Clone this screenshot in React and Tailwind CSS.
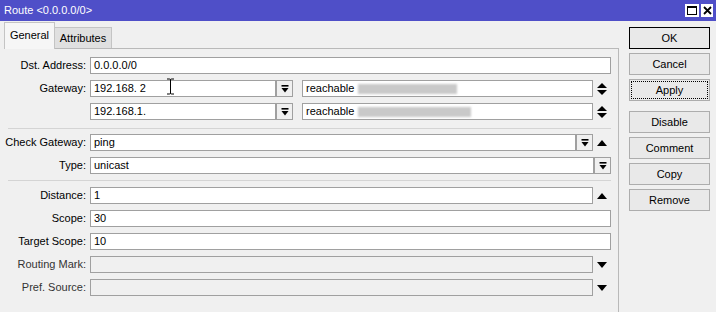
import React from "react";

const FONT = "font-['Liberation_Sans',Arial,sans-serif]";

function DropBtn() {
  return (
    <div className="w-[17px] h-[17px] shrink-0 border border-[#a0a0a0] bg-[#f0f0f0] flex items-center justify-center">
      <svg width="8" height="8" viewBox="0 0 8 8">
        <rect x="0.5" y="0" width="7" height="1.6" fill="#000" />
        <polygon points="0.5,3 7.5,3 4,7.5" fill="#000" />
      </svg>
    </div>
  );
}

function Arrow({ kind }) {
  return (
    <div className="w-[18px] h-[17px] shrink-0 flex items-center justify-center">
      {kind === "up" && (
        <svg width="10" height="6" viewBox="0 0 10 6">
          <polygon points="0,6 10,6 5,0" fill="#000" />
        </svg>
      )}
      {kind === "down" && (
        <svg width="10" height="6" viewBox="0 0 10 6">
          <polygon points="0,0 10,0 5,6" fill="#000" />
        </svg>
      )}
      {kind === "updown" && (
        <svg width="10" height="12" viewBox="0 0 10 12">
          <polygon points="0,5 10,5 5,0" fill="#000" />
          <polygon points="0,7 10,7 5,12" fill="#000" />
        </svg>
      )}
    </div>
  );
}

function Field({ value, disabled, className = "", children }) {
  return (
    <div
      className={`relative h-[17px] border border-[#a0a0a0] flex items-center pl-[3px] leading-none ${
        disabled ? "bg-[#f0f0f0]" : "bg-white"
      } ${className}`}
    >
      <span>{value}</span>
      {children}
    </div>
  );
}

function Row({ label, children }) {
  return (
    <div className="flex h-[17px] items-center">
      <div className="w-[83px] text-right pr-[1px] leading-none">{label}</div>
      <div className="ml-[3px] w-[521px] flex items-center">{children}</div>
    </div>
  );
}

function Sep({ top, bottom }) {
  return (
    <div
      className={`ml-[4px] w-[603px] h-px bg-[#d4d4d4] ${top} ${bottom}`}
    />
  );
}

function Blur({ w }) {
  return (
    <span
      className="ml-[4px] h-[10px] bg-[#c9c9c9] blur-[1px]"
      style={{ width: w }}
    />
  );
}

function Btn({ label, primary, focus, className = "" }) {
  return (
    <div
      className={`relative h-[22px] w-[81px] flex items-center justify-center bg-[#e9e9e9] border ${
        primary ? "border-black" : "border-[#adadad]"
      } ${className}`}
    >
      {focus && (
        <div className="absolute inset-[1px] border border-dotted border-black" />
      )}
      <span className="leading-none">{label}</span>
    </div>
  );
}

export default function App() {
  return (
    <div
      className={`${FONT} w-[716px] h-[312px] overflow-hidden bg-[#f0f0f0] text-[11px] text-black`}
    >
      <div className="h-[21px] bg-[#4f4fc8] flex items-center justify-between pl-[4px] pr-[3px] text-white">
        <span className="leading-none">Route &lt;0.0.0.0/0&gt;</span>
        <div className="flex gap-[2px]">
          <div className="w-[14px] h-[13px] bg-white flex items-center justify-center">
            <div className="w-[10px] h-[9px] border border-black border-t-2" />
          </div>
          <div className="w-[12px] h-[13px] bg-white flex items-center justify-center">
            <svg width="9" height="9" viewBox="0 0 9 9">
              <path d="M1 1 L8 8 M8 1 L1 8" stroke="#000" strokeWidth="1.8" />
            </svg>
          </div>
        </div>
      </div>

      <div className="flex">
        <div className="w-[619px] pl-[4px]">
          <div className="flex items-end h-[27px] pt-[1px]">
            <div className="relative z-10 w-[51px] h-[27px] -mb-px bg-[#f6f6f6] border border-b-0 border-[#c4c4c4] flex items-center justify-center leading-none pb-[2px]">
              General
            </div>
            <div className="w-[57px] h-[21px] bg-[#e0e0e0] border border-l-0 border-b-0 border-[#c4c4c4] flex items-center justify-center leading-none">
              Attributes
            </div>
          </div>
          <div className="h-[264px] bg-[#f0f0f0] border-t border-r border-[#b9b9b9] pt-[8px]">
            <div className="flex flex-col gap-[6px]">
              <Row label="Dst. Address:">
                <Field value="0.0.0.0/0" className="w-[521px]" />
              </Row>
              <Row label="Gateway:">
                <Field value="192.168. 2" className="w-[186px]">
                  <svg
                    className="absolute left-[75px] top-[-3px]"
                    width="9"
                    height="17"
                    viewBox="0 0 9 17"
                  >
                    <path
                      d="M1 1 H3.5 Q4.5 1 4.5 2 V15 Q4.5 16 3.5 16 H1 M8 1 H5.5 Q4.5 1 4.5 2 M4.5 15 Q4.5 16 5.5 16 H8"
                      stroke="#000"
                      strokeWidth="1"
                      fill="none"
                    />
                  </svg>
                </Field>
                <DropBtn />
                <Field value="reachable" className="ml-[9px] w-[291px]">
                  <Blur w={99} />
                </Field>
                <Arrow kind="updown" />
              </Row>
              <Row label="">
                <Field value="192.168.1." className="w-[186px]" />
                <DropBtn />
                <Field value="reachable" className="ml-[9px] w-[291px]">
                  <Blur w={113} />
                </Field>
                <Arrow kind="updown" />
              </Row>
            </div>
            <Sep top="mt-[8px]" bottom="mb-[5px]" />
            <div className="flex flex-col gap-[6px]">
              <Row label="Check Gateway:">
                <Field value="ping" className="w-[486px]" />
                <DropBtn />
                <Arrow kind="up" />
              </Row>
              <Row label="Type:">
                <Field value="unicast" className="w-[504px]" />
                <DropBtn />
              </Row>
            </div>
            <Sep top="mt-[6px]" bottom="mb-[6px]" />
            <div className="flex flex-col gap-[6px]">
              <Row label="Distance:">
                <Field value="1" className="w-[503px]" />
                <Arrow kind="up" />
              </Row>
              <Row label="Scope:">
                <Field value="30" className="w-[521px]" />
              </Row>
              <Row label="Target Scope:">
                <Field value="10" className="w-[521px]" />
              </Row>
              <Row label={<span className="text-[#333]">Routing Mark:</span>}>
                <Field value="" disabled className="w-[503px]" />
                <Arrow kind="down" />
              </Row>
              <Row label={<span className="text-[#333]">Pref. Source:</span>}>
                <Field value="" disabled className="w-[503px]" />
                <Arrow kind="down" />
              </Row>
            </div>
          </div>
        </div>

        <div className="ml-[10px] pt-[6px] flex flex-col gap-[4px]">
          <Btn label="OK" primary />
          <Btn label="Cancel" />
          <Btn label="Apply" focus />
          <Btn label="Disable" className="mt-[6px]" />
          <Btn label="Comment" />
          <Btn label="Copy" />
          <Btn label="Remove" />
        </div>
      </div>
    </div>
  );
}
